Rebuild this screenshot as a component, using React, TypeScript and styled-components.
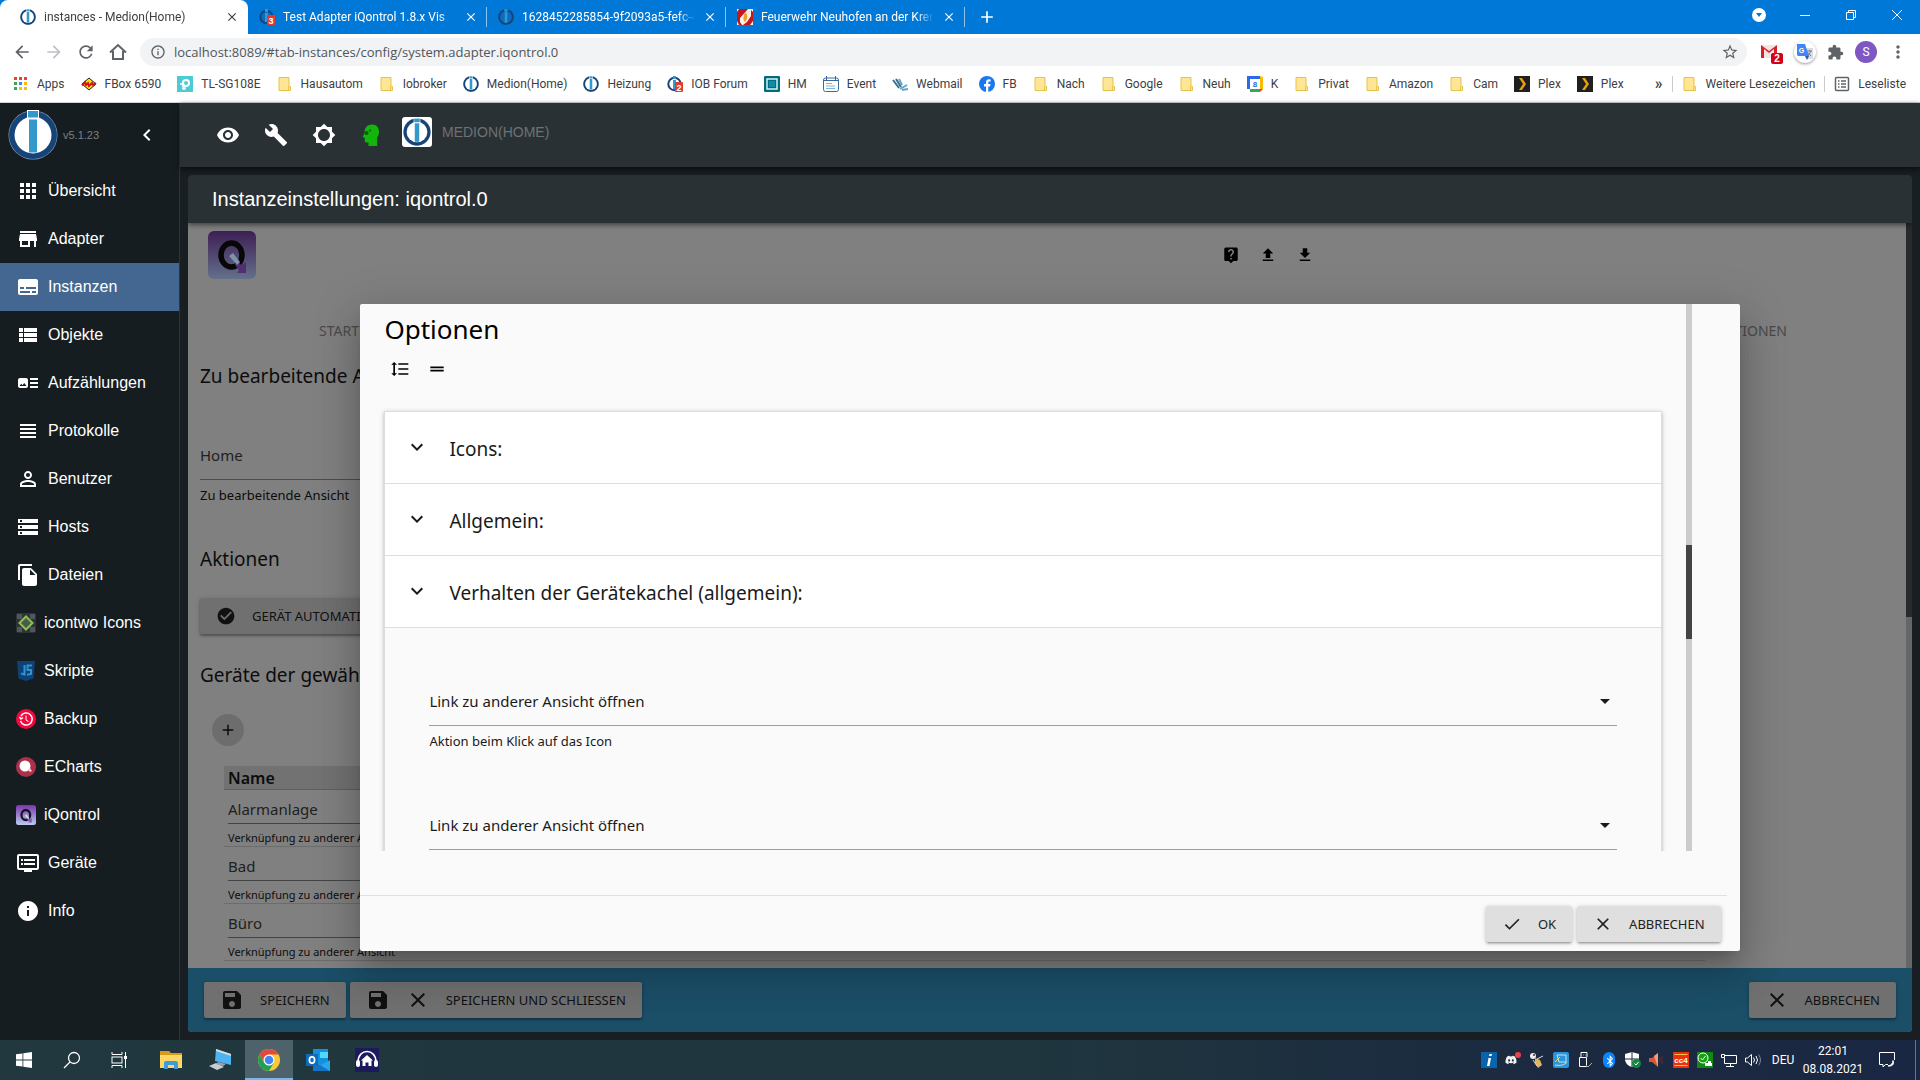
import React from 'react';
import styled, { createGlobalStyle, css } from 'styled-components';
import {
  MdAdd, MdApps, MdArrowBack, MdArrowDropDown, MdArrowForward, MdArtTrack, MdBrightness5, MdBuild,
  MdCheck, MdCheckCircle, MdChevronLeft, MdClose, MdDownload, MdDragHandle, MdDvr, MdExpandMore,
  MdExtension, MdFileCopy, MdFormatLineSpacing, MdInfo, MdInfoOutline, MdLiveHelp, MdMoreVert,
  MdPermIdentity, MdRefresh, MdSave, MdStarBorder, MdStorage, MdStore, MdSubtitles, MdUpload,
  MdViewHeadline, MdViewList, MdVisibility,
} from 'react-icons/md';
import { FaDiscord, FaBluetoothB } from 'react-icons/fa';

const uiFont = 'Roboto, "Noto Sans", sans-serif';
const urlFont = '"Open Sans", "Noto Sans", sans-serif';
const adminFont = '"Liberation Sans", Arial, sans-serif';
const pageFont = '"Noto Sans", "Open Sans", sans-serif';

const GlobalStyle = createGlobalStyle`
  *, *::before, *::after { box-sizing: border-box; }
  body { margin: 0; background: #181e21; }
  button, input, select { font: inherit; color: inherit; margin: 0; border: 0; border-radius: 0; background: none; padding: 0; }
  button { cursor: pointer; }
  a { color: inherit; text-decoration: none; }
  svg { display: block; flex: none; }
`;

const Screen = styled.div`
  display: flex;
  flex-direction: column;
  height: 100vh;
  min-width: 1200px;
  overflow: hidden;
`;

/* ---------- drawings ---------- */

type IconProps = { size?: number };

const BrokerLogo = ({ size = 16, dark = false }: { size?: number; dark?: boolean }) => (
  <svg width={size} height={size} viewBox="0 0 100 100">
    <circle cx="50" cy="50" r="49" fill={dark ? '#0b5aa5' : '#8fa9c4'} />
    <circle cx="50" cy="50" r="48" fill="#164477" />
    <circle cx="50" cy="50" r="37" fill={dark ? '#0a6cc4' : '#fff'} />
    <rect x="38" y="0" width="24" height="18" fill={dark ? '#0a6cc4' : '#fff'} />
    <rect x="40" y="2" width="20" height="13" fill="#3399cc" />
    <rect x="42" y="19" width="16" height="66" fill="#3399cc" />
  </svg>
);

const ForumLogo = ({ count, dark }: { count: string; dark?: boolean }) => (
  <svg width="16" height="16" viewBox="0 0 16 16">
    <circle cx="7.5" cy="8" r="6.2" fill={dark ? '#0a6cc4' : '#fff'} stroke="#164477" strokeWidth="2" />
    <rect x="6" y="0" width="3" height="3" fill="#3399cc" />
    <rect x="6" y="4" width="3" height="9" fill="#3399cc" />
    <rect x="8" y="6" width="8" height="10" rx="1" fill="#e23b2e" />
    <text x="12" y="14.5" fontSize="9" fontWeight="700" fontFamily="Liberation Sans" fill="#fff" textAnchor="middle">{count}</text>
  </svg>
);

const Flame = () => (
  <svg width="16" height="16" viewBox="0 0 16 16">
    <rect width="16" height="16" fill="#f7efe6" />
    <path d="M2 0h9L3 9v4l2 3H2L0 12V3z" fill="#c8161d" />
    <path d="M14 1l2 2v9l-3 4H6l4-3 4-6z" fill="#c8161d" />
    <path d="M8 3c3 3 3 6 0 10-3-3-1-6 0-10z" fill="#f39a2b" />
  </svg>
);

const HomeOutline = () => (
  <svg width="20" height="20" viewBox="0 0 20 20" fill="none" stroke="#5f6368" strokeWidth="2">
    <path d="M2 10.5L10 3l8 7.500M5 9v8h10V9" />
  </svg>
);

const AppsGrid = () => (
  <svg width="16" height="16" viewBox="0 0 16 16">
    {['#ea4335', '#ea4335', '#ea4335', '#34a853', '#4285f4', '#fbbc05', '#34a853', '#fbbc05', '#fbbc05'].map((c, i) => (
      <rect key={i} x={1 + (i % 3) * 5} y={1 + Math.floor(i / 3) * 5} width="3" height="3" fill={c} />
    ))}
  </svg>
);

const Fritz = () => (
  <svg width="16" height="16" viewBox="0 0 16 16">
    <path d="M8 2l7 6-7 6-7-6z" fill="#ffe000" stroke="#222" strokeWidth="1" />
    <path d="M1 9.500L4 6l1 3 2-2 1 3 3-3 1 2 3-2" fill="none" stroke="#d3122a" strokeWidth="2" />
  </svg>
);

const TpLink = () => (
  <svg width="16" height="16" viewBox="0 0 16 16">
    <rect width="16" height="16" fill="#4acbd6" />
    <circle cx="9" cy="7" r="3" fill="none" stroke="#fff" strokeWidth="2" />
    <path d="M3 8h3v5h2v-3" fill="none" stroke="#fff" strokeWidth="1.500" />
  </svg>
);

const FolderMark = () => (
  <svg width="16" height="16" viewBox="0 0 16 16">
    <path d="M2 1.500h10v9h1.500v4H2z" fill="#ffe694" stroke="#e8c24a" />
    <path d="M11.500 14.500v-4" stroke="#e8c24a" />
  </svg>
);

const HomematicMark = () => (
  <svg width="16" height="16" viewBox="0 0 16 16">
    <rect width="16" height="16" rx="1" fill="#036b80" />
    <rect x="3" y="3" width="10" height="10" fill="#036b80" stroke="#d8f1f4" strokeWidth="1.500" />
    <rect x="5" y="5" width="6" height="6" fill="#0d8ea3" />
  </svg>
);

const NoteMark = () => (
  <svg width="16" height="16" viewBox="0 0 16 16" fill="none" stroke="#3c6a99">
    <rect x="0.500" y="2" width="15" height="13.500" rx="2" fill="#fff" />
    <path d="M3.500 0v4M12.500 0v4M1 4.500h14" />
    <path d="M3 7.500h6M3 10h9M3 12.500h9" stroke="#7db5dd" />
  </svg>
);

const WebmailMark = () => (
  <svg width="16" height="16" viewBox="0 0 16 16" fill="none" strokeWidth="2">
    <path d="M1 4l6 8M4 3l5 8" stroke="#3c6f8c" />
    <path d="M7 3l3 6M8 13l7-4M10 14l6-1" stroke="#62a6c4" />
  </svg>
);

const FacebookMark = () => (
  <svg width="16" height="16" viewBox="0 0 16 16">
    <circle cx="8" cy="8" r="8" fill="#1877f2" />
    <path d="M7 16v-5.500H5V8h2V6.500C7 4.400 8.200 3.300 10 3.300l1.600.1v2h-1C9.600 5.400 9.300 6 9.300 6.700V8h2.200l-.4 2.500H9.300V16z" fill="#fff" />
  </svg>
);

const CalendarMark = () => (
  <svg width="16" height="16" viewBox="0 0 16 16">
    <path d="M0 0h13v3H3v10H0z" fill="#2a6ae8" />
    <path d="M13 0l3 1v12h-3z" fill="#fbbc04" />
    <path d="M3 13h10v3H3z" fill="#34a853" />
    <path d="M13 13h3l-3 3z" fill="#ea4335" />
    <rect x="3" y="3" width="10" height="10" fill="#fff" />
    <text x="8" y="11" fontSize="8" fontWeight="700" fontFamily="Liberation Sans" fill="#2a6ae8" textAnchor="middle">8</text>
  </svg>
);

const PlexMark = () => (
  <svg width="16" height="16" viewBox="0 0 16 16">
    <rect width="16" height="16" fill="#1f1f1f" />
    <path d="M5 2h3l4 6-4 6H5l4-6z" fill="#e5a00d" />
  </svg>
);

const ReadingList = () => (
  <svg width="16" height="16" viewBox="0 0 16 16" fill="none" stroke="#5f6368" strokeWidth="1.500">
    <rect x="1.500" y="1.500" width="13" height="13" rx="1" />
    <path d="M4 5h1.500M4 8h1.500M4 11h1.500M7 5h5M7 8h5M7 11h5" />
  </svg>
);

const GmailMark = () => (
  <svg width="24" height="24" viewBox="0 0 24 24">
    <path d="M2 5h16v13H2z" fill="#f1e6e4" />
    <path d="M2 18V5l8 6 8-6v13h-3V9l-5 4-5-4v9z" fill="#db1f26" />
    <rect x="12" y="13" width="12" height="11" rx="2" fill="#d0021b" />
    <text x="18" y="22" fontSize="10" fontWeight="700" fontFamily="Liberation Sans" fill="#fff" textAnchor="middle">2</text>
  </svg>
);

const TranslateMark = () => (
  <svg width="16" height="16" viewBox="0 0 16 16">
    <path d="M6 4h10v11H9z" fill="#d9dde2" />
    <path d="M0 0h8l4 12H1L0 11z" fill="#4285f4" />
    <path d="M8 12h4l-2 4z" fill="#2a56c6" />
    <text x="4.500" y="8.500" fontSize="7" fontWeight="700" fontFamily="Liberation Sans" fill="#fff" textAnchor="middle">G</text>
    <path d="M10 7h5M12.500 6v1M11 12l3-5M11 8.500l3 3.500" stroke="#72808f" fill="none" />
  </svg>
);

const GreenHead = () => (
  <svg width="24" height="24" viewBox="0 0 24 24">
    <path d="M12 1.500c5 0 7 3.500 7 7.500 0 2.500-.8 4-1.800 5.500V23H8.500v-3.500H6.200c-.9 0-1.400-.6-1.400-1.400V15l-1.600-.8c-.4-.2-.4-.6-.2-1L4.500 10C4.500 5 7 1.500 12 1.500z" fill="#12b50a" />
    <circle cx="6.500" cy="10" r="2" fill="#0a5c0c" />
    <circle cx="10" cy="7.500" r="1" fill="#0a5c0c" />
  </svg>
);

const QontrolLogo = ({ size = 20, dim = false }: IconProps & { dim?: boolean }) => (
  <svg width={size} height={size} viewBox="0 0 48 48">
    <defs>
      <linearGradient id={dim ? 'qdim' : 'qlit'} x1="0" y1="0" x2="0" y2="1">
        <stop offset="0" stopColor={dim ? '#3d1f55' : '#7a35ad'} />
        <stop offset="1" stopColor={dim ? '#64708a' : '#b9cdf0'} />
      </linearGradient>
    </defs>
    <rect width="48" height="48" rx="6" fill={`url(#${dim ? 'qdim' : 'qlit'})`} />
    <ellipse cx="23.500" cy="24" rx="10.500" ry="12" fill="none" stroke={dim ? '#070707' : '#15151c'} strokeWidth="5.500" />
    <path d="M30 30l3 4 5-3v11h-9l2-3-4-5z" fill={dim ? '#503070' : '#8d55bb'} />
    <path d="M21 25l4-3 7 9-3 3z" fill={dim ? '#7d93a6' : '#c5d8f2'} />
  </svg>
);

const IconTwo = () => (
  <svg width="20" height="20" viewBox="0 0 20 20">
    <rect width="20" height="20" rx="2" fill="#2c3436" />
    <path d="M1 1h5v5H1zM14 1h5v5h-5zM1 14h5v5H1zM14 14h5v5h-5z" fill="#50575a" />
    <path d="M10 3.500l6.500 6.500-6.500 6.500L3.500 10z" fill="#4a5a4c" stroke="#8cc152" strokeWidth="2" />
  </svg>
);

const ScriptMark = () => (
  <svg width="20" height="20" viewBox="0 0 20 20">
    <path d="M1 0h18l-1.500 17.500L10 20l-7.500-2.500z" fill="#0d4177" />
    <path d="M8.500 4v9.500l-3.500-1M16 4.500h-4.500V9H15v4l-4 .8" fill="none" stroke="#2f93cc" strokeWidth="2" />
  </svg>
);

const BackupMark = () => (
  <svg width="20" height="20" viewBox="0 0 20 20" fill="none" stroke="#fff">
    <circle cx="10" cy="10" r="10" fill="#f5063d" stroke="none" />
    <path d="M4.500 12a6 6 0 1 0 .5-5M3.500 8l1.500 2 2-1.500" strokeWidth="1.500" />
    <path d="M10 6.500V11l2.500 1.500" />
  </svg>
);

const ChartsMark = () => (
  <svg width="20" height="20" viewBox="0 0 20 20">
    <circle cx="10" cy="10" r="10" fill="#ac2f4c" />
    <circle cx="9" cy="9" r="5.500" fill="#fff" />
    <path d="M12 13l2-2 2 3-2 1z" fill="#f0cdd6" />
  </svg>
);

const WindowsMark = () => (
  <svg width="16" height="16" viewBox="0 0 16 16" fill="#fff">
    <path d="M0 2.300L6.500 1.400v6.200H0zM7.300 1.300L16 0v7.600H7.300zM0 8.400h6.500v6.200L0 13.700zM7.300 8.400H16V16l-8.700-1.300z" />
  </svg>
);

const SearchMark = () => (
  <svg width="18" height="18" viewBox="0 0 18 18" fill="none" stroke="#fff" strokeWidth="1.300">
    <circle cx="11" cy="7" r="5.500" />
    <path d="M7 11l-6 6" />
  </svg>
);

const TaskViewMark = () => (
  <svg width="18" height="16" viewBox="0 0 18 16" fill="none" stroke="#fff">
    <path d="M1 0v2.500h10V0M1 16v-2.500h10V16M14.500 0v16" />
    <rect x="1" y="5" width="10" height="6" />
    <rect x="13" y="4" width="3" height="3" fill="#fff" stroke="none" />
  </svg>
);

const ExplorerMark = () => (
  <svg width="24" height="20" viewBox="0 0 24 20">
    <path d="M1 1h9l2 2h11v15H1z" fill="#d99a1c" />
    <path d="M1 5h22v13H1z" fill="#ffd766" />
    <path d="M5 19v-6c0-1 .7-2 2-2h10c1.300 0 2 1 2 2v6h-4v-4H9v4z" fill="#3f9bdc" />
  </svg>
);

const RemoteMark = () => (
  <svg width="24" height="22" viewBox="0 0 24 22">
    <path d="M8 0l15 5v11L7 12z" fill="#4db4f2" />
    <path d="M8 0l15 5v2L8 2z" fill="#d5dde2" />
    <path d="M1 17l7-3 8 4-7 3z" fill="#c8cfd3" />
    <path d="M10 13l8 2-3 2-7-2z" fill="#9aa5ab" />
  </svg>
);

const ChromeMark = () => (
  <svg width="22" height="22" viewBox="0 0 22 22">
    <circle cx="11" cy="11" r="11" fill="#fbc934" />
    <path d="M1.500 5.500A11 11 0 0 1 20.500 5.500H11L6.200 13.800z" fill="#e04a3c" />
    <path d="M1.500 5.500A11 11 0 0 0 11 22l4.800-8.200H6.200z" fill="#1f9f58" />
    <circle cx="11" cy="11" r="5.500" fill="#fff" />
    <circle cx="11" cy="11" r="4.300" fill="#4285f4" />
  </svg>
);

const OutlookMark = () => (
  <svg width="24" height="22" viewBox="0 0 24 22">
    <rect x="7" y="0" width="15" height="18" fill="#1490df" />
    <rect x="14" y="3" width="8" height="6" fill="#50d9ff" />
    <path d="M7 12l8 4 9-5v11H7z" fill="#28a8ea" />
    <path d="M7 12l17 10H7z" fill="#1473c5" />
    <rect x="0" y="5" width="12" height="12" fill="#0f6cbd" />
    <ellipse cx="6" cy="11" rx="2.600" ry="3.200" fill="none" stroke="#fff" strokeWidth="1.700" />
  </svg>
);

const RadioHouse = () => (
  <svg width="24" height="24" viewBox="0 0 24 24">
    <rect width="24" height="24" fill="#1b1b5c" />
    <path d="M3 14C3 0 21 0 21 14" fill="none" stroke="#fff" strokeWidth="1.500" />
    <rect x="1" y="12" width="4" height="7" rx="2" fill="#fff" />
    <rect x="19" y="12" width="4" height="7" rx="2" fill="#fff" />
    <path d="M12 7l6 5.500h-1.500V18h-3v-3.500h-3V18h-3v-5.500H6z" fill="#fff" />
  </svg>
);

/* ---------- browser window ---------- */

const TabStrip = styled.div`
  display: flex;
  height: 34px;
  flex: none;
  background: #0078d7;
  color: #fff;
  font: 12px/34px ${uiFont};
`;

const Tab = styled.div<{ $active?: boolean }>`
  display: flex;
  align-items: center;
  gap: 8px;
  width: 239px;
  padding: 0 9px 0 11px;
  ${p => p.$active ? css`
    width: 248px;
    padding-left: 20px;
    background: #fff;
    color: #3c4043;
    border-radius: 8px 8px 0 0;
  ` : css`
    background: linear-gradient(#8fc3ee, #8fc3ee) right center / 1px 20px no-repeat;
  `}
`;

const TabTitle = styled.a`
  flex: 1;
  min-width: 0;
  overflow: hidden;
  white-space: nowrap;
  mask-image: linear-gradient(90deg, #000 90%, transparent);
`;

const PlainButton = styled.button`
  display: grid;
  place-items: center;
`;

const NewTab = styled(PlainButton)`
  width: 44px;
`;

const WindowControls = styled.div`
  display: flex;
  margin-left: auto;
  padding-bottom: 5px;
`;

const WindowButton = styled(PlainButton)`
  width: 46px;
`;

const Toolbar = styled.div`
  display: flex;
  align-items: center;
  flex: none;
  height: 36px;
  padding: 0 12px;
  background: #fff;
  color: #5f6368;
`;

const NavButtons = styled.div`
  display: flex;
  gap: 12px;
  padding-right: 12px;
`;

const AddressBar = styled.label`
  display: flex;
  align-items: center;
  gap: 8px;
  flex: 1;
  height: 28px;
  padding: 0 8px 0 10px;
  border-radius: 14px;
  background: #f1f3f4;
  font: 13px/28px ${urlFont};
  input { flex: 1; outline: none; color: #50555a; }
`;

const Extensions = styled.div`
  display: flex;
  align-items: center;
  gap: 11px;
  padding-left: 12px;
`;

const RoundBadge = styled.span<{ $bg: string }>`
  display: grid;
  place-items: center;
  width: 22px;
  height: 22px;
  border-radius: 50%;
  background: ${p => p.$bg};
  color: #fff;
  font: 12px/22px ${uiFont};
`;

const ShadowBadge = styled(RoundBadge)`
  box-shadow: 0 1px 3px rgba(0, 0, 0, .4);
`;

const Bookmarks = styled.nav`
  display: flex;
  align-items: center;
  gap: 16px;
  flex: none;
  height: 33px;
  padding: 0 14px 4px 13px;
  border-bottom: 1px solid #d0d2d4;
  background: #fff;
  color: #3c4043;
  font: 12px/28px ${uiFont};
`;

const Bookmark = styled.a`
  display: flex;
  align-items: center;
  gap: 8px;
  white-space: nowrap;
`;

const BookmarkEnd = styled.div`
  display: flex;
  align-items: center;
  gap: 9px;
  margin-left: auto;
`;

const MoreBookmarks = styled.button`
  font-size: 16px;
  font-weight: 500;
`;

const Rule = styled.span`
  width: 1px;
  height: 16px;
  background: #c8cacc;
`;

const bookmarks: [React.ReactNode, string][] = [
  [<AppsGrid />, 'Apps'], [<Fritz />, 'FBox 6590'], [<TpLink />, 'TL-SG108E'], [<FolderMark />, 'Hausautom'],
  [<FolderMark />, 'Iobroker'], [<BrokerLogo />, 'Medion(Home)'], [<BrokerLogo />, 'Heizung'],
  [<ForumLogo count="2" />, 'IOB Forum'], [<HomematicMark />, 'HM'], [<NoteMark />, 'Event'],
  [<WebmailMark />, 'Webmail'], [<FacebookMark />, 'FB'], [<FolderMark />, 'Nach'], [<FolderMark />, 'Google'],
  [<FolderMark />, 'Neuh'], [<CalendarMark />, 'K'], [<FolderMark />, 'Privat'], [<FolderMark />, 'Amazon'],
  [<FolderMark />, 'Cam'], [<PlexMark />, 'Plex'], [<PlexMark />, 'Plex'],
];

const tabs: [React.ReactNode, string][] = [
  [<BrokerLogo />, 'instances - Medion(Home)'],
  [<ForumLogo count="3" dark />, 'Test Adapter iQontrol 1.8.x Vis'],
  [<BrokerLogo dark />, '1628452285854-9f2093a5-fefc-4'],
  [<Flame />, 'Feuerwehr Neuhofen an der Krem'],
];

const Browser = () => (
  <>
    <TabStrip>
      {tabs.map(([icon, title], i) => (
        <Tab key={title} $active={i === 0}>
          {icon}
          <TabTitle href="#">{title}</TabTitle>
          <PlainButton aria-label="Tab schließen"><MdClose size={14} /></PlainButton>
        </Tab>
      ))}
      <NewTab aria-label="Neuer Tab"><MdAdd size={20} /></NewTab>
      <WindowControls>
        <WindowButton aria-label="Tabsuche">
          <svg width="14" height="14" viewBox="0 0 14 14"><circle cx="7" cy="7" r="7" fill="#fff" /><path d="M4 5h6l-3 4z" fill="#0078d7" /></svg>
        </WindowButton>
        <WindowButton aria-label="Minimieren">
          <svg width="10" height="10" viewBox="0 0 10 10"><path d="M0 5.500h10" stroke="#fff" /></svg>
        </WindowButton>
        <WindowButton aria-label="Verkleinern">
          <svg width="10" height="10" viewBox="0 0 10 10" fill="none" stroke="#fff"><path d="M.5 2.500h7v7h-7zM2.500 2.500v-2h7v7h-2" /></svg>
        </WindowButton>
        <WindowButton aria-label="Schließen">
          <svg width="10" height="10" viewBox="0 0 10 10"><path d="M0 0l10 10M10 0L0 10" stroke="#fff" /></svg>
        </WindowButton>
      </WindowControls>
    </TabStrip>
    <Toolbar>
      <NavButtons>
        <PlainButton aria-label="Zurück"><MdArrowBack size={20} /></PlainButton>
        <PlainButton aria-label="Vorwärts"><MdArrowForward size={20} color="#bdc1c6" /></PlainButton>
        <PlainButton aria-label="Neu laden"><MdRefresh size={20} /></PlainButton>
        <PlainButton aria-label="Startseite"><HomeOutline /></PlainButton>
      </NavButtons>
      <AddressBar>
        <MdInfoOutline size={16} />
        <input aria-label="Adresse" defaultValue="localhost:8089/#tab-instances/config/system.adapter.iqontrol.0" />
        <MdStarBorder size={18} />
      </AddressBar>
      <Extensions>
        <GmailMark />
        <ShadowBadge $bg="#fff"><TranslateMark /></ShadowBadge>
        <MdExtension size={17} />
        <RoundBadge $bg="#7e57c2">S</RoundBadge>
        <MdMoreVert size={20} />
      </Extensions>
    </Toolbar>
    <Bookmarks>
      {bookmarks.map(([icon, label], i) => <Bookmark href="#" key={i}>{icon}{label}</Bookmark>)}
      <BookmarkEnd>
        <MoreBookmarks>»</MoreBookmarks>
        <Rule />
        <Bookmark href="#"><FolderMark />Weitere Lesezeichen</Bookmark>
        <Rule />
        <Bookmark href="#"><ReadingList />Leseliste</Bookmark>
      </BookmarkEnd>
    </Bookmarks>
  </>
);

/* ---------- admin shell ---------- */

const Shell = styled.div`
  display: flex;
  flex: 1;
  min-height: 0;
  font-family: ${adminFont};
  color: #fff;
`;

const Sidebar = styled.aside`
  flex: none;
  width: 180px;
  border-right: 1px solid #2d373b;
  background: #161d20;
`;

const Brand = styled.div`
  display: flex;
  align-items: center;
  gap: 5px;
  height: 64px;
  padding-left: 8px;
  color: #7b8082;
  font-size: 11px;
  button { margin-left: auto; margin-right: 20px; color: #fff; }
`;

const NavItem = styled.a<{ $active?: boolean }>`
  display: flex;
  align-items: center;
  gap: 8px;
  height: 48px;
  padding-left: 16px;
  font-size: 16px;
  background: ${p => (p.$active ? '#446791' : 'transparent')};
`;

const IconSlot = styled.span<{ $image: boolean }>`
  display: grid;
  place-items: center;
  width: ${p => (p.$image ? 20 : 24)}px;
`;

const navItems: [React.ReactNode, string, boolean][] = [
  [<MdApps size={24} />, 'Übersicht', false], [<MdStore size={24} />, 'Adapter', false],
  [<MdSubtitles size={24} />, 'Instanzen', false], [<MdViewList size={24} />, 'Objekte', false],
  [<MdArtTrack size={24} />, 'Aufzählungen', false], [<MdViewHeadline size={24} />, 'Protokolle', false],
  [<MdPermIdentity size={24} />, 'Benutzer', false], [<MdStorage size={24} />, 'Hosts', false],
  [<MdFileCopy size={24} />, 'Dateien', false], [<IconTwo />, 'icontwo Icons', true],
  [<ScriptMark />, 'Skripte', true], [<BackupMark />, 'Backup', true], [<ChartsMark />, 'ECharts', true],
  [<QontrolLogo />, 'iQontrol', true], [<MdDvr size={24} />, 'Geräte', false], [<MdInfo size={24} />, 'Info', false],
];

const Main = styled.main`
  display: flex;
  flex-direction: column;
  flex: 1;
  min-width: 0;
  background: #181e21;
`;

const AppHeader = styled.header`
  display: flex;
  align-items: center;
  gap: 24px;
  flex: none;
  height: 64px;
  padding-left: 36px;
  background: #2a3135;
  box-shadow: 0 2px 6px rgba(0, 0, 0, .6);
`;

const HostButton = styled.button`
  display: flex;
  align-items: center;
  gap: 10px;
  height: 36px;
  margin: 0 0 6px -6px;
  color: #6d7274;
  font-size: 14px;
`;

const HostIcon = styled.span`
  display: grid;
  place-items: center;
  width: 30px;
  height: 30px;
  border-radius: 3px;
  background: #fff;
`;

const Panel = styled.section`
  display: flex;
  flex-direction: column;
  flex: 1;
  min-height: 0;
  margin: 8px;
  border-radius: 4px;
  overflow: hidden;
`;

const PanelTitle = styled.h1`
  z-index: 1;
  flex: none;
  margin: 0;
  padding-left: 24px;
  background: #2a3135;
  box-shadow: 0 2px 5px rgba(0, 0, 0, .5);
  font: 400 20px/48px ${adminFont};
`;

const Frame = styled.div`
  position: relative;
  display: flex;
  flex-direction: column;
  flex: 1;
  min-height: 0;
  background: #808080;
  color: #0c0c0c;
  font-family: ${pageFont};
`;

const PageRow = styled.div`
  display: flex;
  flex: 1;
  min-height: 0;
  overflow: hidden;
`;

const Page = styled.div`
  flex: 1;
  min-width: 0;
`;

const Track = styled.div<{ $color: string }>`
  flex: none;
  width: 6px;
  background: ${p => p.$color};
`;

const Thumb = styled.div<{ $color: string; $top: string; $height: string }>`
  height: ${p => p.$height};
  margin-top: ${p => p.$top};
  background: ${p => p.$color};
`;

const PageHeader = styled.div`
  display: grid;
  grid-template-columns: 60% 1fr;
  height: 84px;
  padding-top: 8px;
`;

const PageLogo = styled.div`
  padding-left: 20px;
`;

const PageTools = styled.div`
  display: flex;
  gap: 13px;
  height: 48px;
  color: #000;
  button { width: 24px; }
`;

const PageTabs = styled.nav`
  display: flex;
  justify-content: space-between;
  padding: 0 119px 0 131px;
  color: #4a4a4a;
  font-size: 14px;
  line-height: 48px;
`;

const PageBody = styled.div`
  padding: 8px 201px 0 12px;
`;

const Heading = styled.h2`
  margin: 0;
  font-size: 19px;
  font-weight: 400;
  line-height: 26px;
  padding-bottom: 2px;
  white-space: nowrap;
`;

const Field = styled.label`
  display: flex;
  flex-direction: column;
  gap: 7px;
  margin: 40px 0 43px;
  font-size: 13px;
  line-height: 16px;
  input { height: 49px; border-bottom: 1px solid #4c4c4c; font-size: 15px; color: #202020; }
`;

const buttonBase = css`
  display: flex;
  align-items: center;
  height: 36px;
  padding: 0 16px;
  gap: 16px;
  border-radius: 2px;
  font-size: 13px;
  line-height: 36px;
  white-space: nowrap;
`;

const GreyButton = styled.button`
  ${buttonBase}
  background: #707070;
  color: #111;
  box-shadow: 0 2px 2px rgba(0, 0, 0, .25), 0 1px 5px rgba(0, 0, 0, .2);
`;

const DetectButton = styled(GreyButton)`
  margin: 24px 0 28px;
`;

const AddButton = styled(PlainButton)`
  width: 32px;
  height: 32px;
  margin: 24px 12px 20px;
  border-radius: 50%;
  background: #6d6d6d;
`;

const DeviceTable = styled.table`
  width: calc(100% - 24px);
  margin-left: 24px;
  border-spacing: 0;
  th {
    height: 24px;
    padding: 0 4px;
    border-bottom: 1px solid #5f5f5f;
    background: #727272;
    font-size: 16px;
    font-weight: 600;
    line-height: 22px;
    text-align: left;
  }
  td { padding: 5px 4px 0; border-bottom: 1px solid #6c6c6c; }
  label { display: flex; flex-direction: column; gap: 6px; font-size: 11px; line-height: 16px; }
  input { height: 29px; border-bottom: 1px solid #444; font-size: 15px; color: #202020; }
`;

const SaveBar = styled.footer`
  display: flex;
  align-items: center;
  gap: 4px;
  flex: none;
  height: 64px;
  padding: 0 16px;
  background: #1b4f68;
  button:last-child { margin-left: auto; }
`;

/* ---------- options dialog ---------- */

const Dialog = styled.div`
  position: absolute;
  top: 10%;
  left: 10%;
  z-index: 2;
  display: flex;
  flex-direction: column;
  width: 80%;
  height: 80%;
  border-radius: 2px;
  background: #fafafa;
  color: #1a1a1a;
  box-shadow: 0 24px 38px 3px rgba(0, 0, 0, .14), 0 9px 46px 8px rgba(0, 0, 0, .12), 0 11px 15px -7px rgba(0, 0, 0, .2);
`;

const DialogScroll = styled.div`
  display: flex;
  flex: 1;
  min-height: 0;
  margin-right: 48px;
  overflow: hidden;
`;

const DialogContent = styled.div`
  flex: 1;
  padding: 8px 24px 0;
`;

const DialogTitle = styled.h2`
  margin: 0;
  color: #000;
  font-size: 26px;
  font-weight: 400;
  line-height: 34px;
`;

const DialogTools = styled.div`
  display: flex;
  gap: 13px;
  height: 46px;
  margin-bottom: 19px;
  padding-left: 4px;
  color: #000;
  button { width: 24px; }
`;

const Accordion = styled.div`
  border: 1px solid #ddd;
  box-shadow: 0 2px 2px rgba(0, 0, 0, .14), 0 1px 5px rgba(0, 0, 0, .2);
`;

const AccordionRow = styled.button`
  display: flex;
  align-items: center;
  gap: 20px;
  width: 100%;
  height: 72px;
  padding: 4px 20px 0;
  border-bottom: 1px solid #ddd;
  background: #fff;
  font-size: 19px;
  line-height: 24px;
  svg { margin-bottom: 4px; }
`;

const AccordionBody = styled.div`
  padding: 49px 44px 48px;
`;

const SelectField = styled.label`
  display: flex;
  flex-direction: column;
  gap: 7px;
  margin-bottom: 52px;
  font-size: 13px;
  line-height: 16px;
`;

const SelectBox = styled.span`
  display: grid;
  align-items: center;
  border-bottom: 1px solid #9e9e9e;
  & > * { grid-area: 1 / 1; }
  select { height: 48px; appearance: none; font-size: 15px; outline: none; }
  svg { justify-self: end; pointer-events: none; }
`;

const DialogFooter = styled.div`
  display: flex;
  justify-content: flex-end;
  gap: 5px;
  margin: 44px 13px 0 0;
  padding: 10px 6px 9px;
  border-top: 1px solid #e0e0e0;
`;

const DialogButton = styled.button`
  ${buttonBase}
  background: #dfdfdf;
  color: #222;
  box-shadow: 0 2px 2px rgba(0, 0, 0, .14), 0 3px 1px -2px rgba(0, 0, 0, .12), 0 1px 5px rgba(0, 0, 0, .2);
`;

const OptionSelect = ({ caption }: { caption?: string }) => (
  <SelectField>
    <SelectBox>
      <select defaultValue="link" aria-label={caption ? undefined : 'Aktion'}>
        <option value="link">Link zu anderer Ansicht öffnen</option>
      </select>
      <MdArrowDropDown size={24} />
    </SelectBox>
    {caption}
  </SelectField>
);

const OptionsDialog = () => (
  <Dialog role="dialog" aria-label="Optionen">
    <DialogScroll>
      <DialogContent>
        <DialogTitle>Optionen</DialogTitle>
        <DialogTools>
          <PlainButton aria-label="Alle aufklappen"><MdFormatLineSpacing size={20} /></PlainButton>
          <PlainButton aria-label="Alle zuklappen"><MdDragHandle size={20} /></PlainButton>
        </DialogTools>
        <Accordion>
          {['Icons:', 'Allgemein:', 'Verhalten der Gerätekachel (allgemein):'].map(t => (
            <AccordionRow key={t}><MdExpandMore size={24} />{t}</AccordionRow>
          ))}
          <AccordionBody>
            <OptionSelect caption="Aktion beim Klick auf das Icon" />
            <OptionSelect />
          </AccordionBody>
        </Accordion>
      </DialogContent>
      <Track $color="#ccc"><Thumb $color="#444" $top="241px" $height="94px" /></Track>
    </DialogScroll>
    <DialogFooter>
      <DialogButton><MdCheck size={20} />OK</DialogButton>
      <DialogButton><MdClose size={20} />ABBRECHEN</DialogButton>
    </DialogFooter>
  </Dialog>
);

const Admin = () => (
  <Shell>
    <Sidebar>
      <Brand>
        <BrokerLogo size={50} />v5.1.23
        <PlainButton aria-label="Menü einklappen"><MdChevronLeft size={24} /></PlainButton>
      </Brand>
      <nav>
        {navItems.map(([icon, label, image]) => (
          <NavItem href="#" key={label} $active={label === 'Instanzen'}>
            <IconSlot $image={image}>{icon}</IconSlot>{label}
          </NavItem>
        ))}
      </nav>
    </Sidebar>
    <Main>
      <AppHeader>
        <PlainButton aria-label="Sichtbarkeit"><MdVisibility size={24} /></PlainButton>
        <PlainButton aria-label="Einstellungen"><MdBuild size={24} /></PlainButton>
        <PlainButton aria-label="Farbschema"><MdBrightness5 size={24} /></PlainButton>
        <PlainButton aria-label="Expertenmodus"><GreenHead /></PlainButton>
        <HostButton><HostIcon><BrokerLogo size={28} /></HostIcon>MEDION(HOME)</HostButton>
      </AppHeader>
      <Panel>
        <PanelTitle>Instanzeinstellungen: iqontrol.0</PanelTitle>
        <Frame>
          <PageRow>
            <Page>
              <PageHeader>
                <PageLogo><QontrolLogo size={48} dim /></PageLogo>
                <PageTools>
                  <PlainButton aria-label="Hilfe"><MdLiveHelp size={18} /></PlainButton>
                  <PlainButton aria-label="Hochladen"><MdUpload size={18} /></PlainButton>
                  <PlainButton aria-label="Herunterladen"><MdDownload size={18} /></PlainButton>
                </PageTools>
              </PageHeader>
              <PageTabs><a href="#">START</a><a href="#">OPTIONEN</a></PageTabs>
              <PageBody>
                <Heading>Zu bearbeitende Ansicht</Heading>
                <Field><input defaultValue="Home" />Zu bearbeitende Ansicht</Field>
                <Heading>Aktionen</Heading>
                <DetectButton><MdCheckCircle size={20} />GERÄT AUTOMATISCH</DetectButton>
                <Heading>Geräte der gewählten Ansicht</Heading>
                <AddButton aria-label="Gerät hinzufügen"><MdAdd size={18} /></AddButton>
                <DeviceTable>
                  <thead><tr><th>Name</th></tr></thead>
                  <tbody>
                    {['Alarmanlage', 'Bad', 'Büro'].map(name => (
                      <tr key={name}>
                        <td><label><input defaultValue={name} />Verknüpfung zu anderer Ansicht</label></td>
                      </tr>
                    ))}
                  </tbody>
                </DeviceTable>
              </PageBody>
            </Page>
            <Track $color="#666"><Thumb $color="#2a2a2a" $top="0" $height="394px" /></Track>
          </PageRow>
          <SaveBar>
            <GreyButton><MdSave size={24} />SPEICHERN</GreyButton>
            <GreyButton><MdSave size={24} /><MdClose size={24} />SPEICHERN UND SCHLIESSEN</GreyButton>
            <GreyButton><MdClose size={24} />ABBRECHEN</GreyButton>
          </SaveBar>
          <OptionsDialog />
        </Frame>
      </Panel>
    </Main>
  </Shell>
);

/* ---------- taskbar ---------- */

const TaskbarRoot = styled.footer`
  display: flex;
  flex: none;
  height: 40px;
  background: linear-gradient(90deg, #21383f 0%, #1f353e 55%, #1b2a40 80%, #1a2743 100%);
  color: #fff;
  font: 12px/18px ${uiFont};
`;

const TaskGroup = styled.div`
  display: flex;
  margin-right: 3px;
`;

const AppGroup = styled.div`
  display: flex;
  gap: 1px;
`;

const TaskButton = styled(PlainButton)<{ $active?: boolean }>`
  width: 48px;
  ${p => p.$active && css`
    background: #4e626b;
    box-shadow: inset 0 -2px #76b9ed;
  `}
`;

const Tray = styled.div`
  display: flex;
  align-items: center;
  margin-left: auto;
`;

const TrayIcon = styled.span`
  display: grid;
  place-items: center;
  width: 24px;
`;

const Language = styled.span`
  width: 36px;
  text-align: center;
`;

const Clock = styled.time`
  width: 64px;
  text-align: center;
`;

const Notice = styled(PlainButton)`
  width: 44px;
  margin-right: 6px;
`;

const ShowDesktop = styled.button`
  align-self: stretch;
  width: 5px;
  border-left: 1px solid #6c7586;
`;

const tray: React.ReactNode[] = [
  <svg width="16" height="16" viewBox="0 0 16 16"><rect width="16" height="16" fill="#0a64ad" /><path d="M8.500 2h2.500l-.5 2H8zM7.500 6H10l-1.500 8H6z" fill="#fff" /></svg>,
  <svg width="16" height="16" viewBox="0 0 16 16"><FaDiscord x="0" y="2" width="15" height="13" color="#f2f2f2" /><circle cx="13" cy="3" r="3" fill="#ed4245" /></svg>,
  <svg width="16" height="16" viewBox="0 0 16 16"><circle cx="4" cy="4" r="3" fill="#eee" /><circle cx="5" cy="3" r="1" fill="#333" /><path d="M6 6l5 2 2 5-4 3-3-5z" fill="#e6b25a" /><path d="M8 7l6-3M4 8l4 6" stroke="#ddd" /></svg>,
  <svg width="16" height="16" viewBox="0 0 16 16"><rect width="16" height="16" rx="2" fill="#2b95d6" /><path d="M4 3h9v7H6zM2 13c5 1 10 0 12-3" fill="none" stroke="#bfe4f8" /><path d="M2 10l5-5" stroke="#e8d27a" /></svg>,
  <svg width="16" height="16" viewBox="0 0 16 16" fill="none" stroke="#fff"><path d="M4 5V.5h6V5M2.500 5.500h7v9h-7zM6 3h.5M8 3h.5" /><path d="M9 13l2 2 4-4" stroke="#aaa" /></svg>,
  <svg width="16" height="16" viewBox="0 0 16 16"><rect x="2" width="12" height="16" rx="6" fill="#0a84ff" /><FaBluetoothB x="3" y="3" width="10" height="10" color="#fff" /></svg>,
  <svg width="16" height="16" viewBox="0 0 16 16"><path d="M7 0l7 2v5c0 4-3 7-7 8-4-1-7-4-7-8V2z" fill="#fff" /><path d="M7 0v15M0 7h14" stroke="#1b2a40" /><circle cx="11.500" cy="11.500" r="4.500" fill="#10893e" /><path d="M9.500 11.500l1.500 1.500 2.500-3" stroke="#fff" fill="none" /></svg>,
  <svg width="16" height="16" viewBox="0 0 16 16"><path d="M0 6h3l6-5v14l-6-5H0z" fill="#d5583a" /><path d="M5 4l4-3v14z" fill="#f19b80" /><path d="M11 5v6M13 4v8" stroke="#5c2a2c" /></svg>,
  <svg width="16" height="16" viewBox="0 0 16 16"><rect width="16" height="16" fill="#e8340c" /><path d="M1.500 2.500h13M1.500 13.500h13" stroke="#ffc04a" /><text x="8" y="11" fontSize="8" fontWeight="700" fontFamily="Liberation Sans" fill="#fff" textAnchor="middle">cc4</text></svg>,
  <svg width="16" height="16" viewBox="0 0 16 16"><rect width="16" height="16" fill="#0f8a12" /><circle cx="6" cy="6" r="5" fill="#13a10e" stroke="#fff" /><path d="M3.500 6l2 2 3-4" stroke="#fff" fill="none" /><path d="M8 11h7v3H8zM11 9h3v2h-3z" fill="#fff" /></svg>,
  <svg width="16" height="16" viewBox="0 0 16 16" fill="none" stroke="#fff"><path d="M4 3.500h11.500v8H3.500V6M9.500 12v2.500M5 14.500h8M.5 2.500h3v3h-3z" /></svg>,
  <svg width="16" height="16" viewBox="0 0 16 16" fill="none" stroke="#fff"><path d="M.5 6h2l4-3.500v11L2.500 10h-2zM8.500 5.500q2 2.500 0 5M11 4q3 4 0 8" /><path d="M13.500 2.500q4 5.500 0 11" stroke="#7c8798" /></svg>,
];

const Taskbar = () => (
  <TaskbarRoot>
    <TaskGroup>
      <TaskButton aria-label="Start"><WindowsMark /></TaskButton>
      <TaskButton aria-label="Suche"><SearchMark /></TaskButton>
      <TaskButton aria-label="Taskansicht"><TaskViewMark /></TaskButton>
    </TaskGroup>
    <AppGroup>
      <TaskButton aria-label="Explorer"><ExplorerMark /></TaskButton>
      <TaskButton aria-label="Remotedesktop"><RemoteMark /></TaskButton>
      <TaskButton aria-label="Chrome" $active><ChromeMark /></TaskButton>
      <TaskButton aria-label="Outlook"><OutlookMark /></TaskButton>
      <TaskButton aria-label="Radio"><RadioHouse /></TaskButton>
    </AppGroup>
    <Tray>
      {tray.map((icon, i) => <TrayIcon key={i}>{icon}</TrayIcon>)}
      <Language>DEU</Language>
      <Clock>22:01<br />08.08.2021</Clock>
      <Notice aria-label="Benachrichtigungen">
        <svg width="18" height="18" viewBox="0 0 18 18" fill="none" stroke="#fff"><path d="M10 13.500H7.500L5 16v-2.500H1.500v-12h15V9" /><path d="M15 9.500c1.500 4-1 6-5 5.500 3-.5 5-2.500 5-5.500z" fill="#fff" /></svg>
      </Notice>
      <ShowDesktop aria-label="Desktop anzeigen" />
    </Tray>
  </TaskbarRoot>
);

export default function App() {
  return (
    <Screen>
      <GlobalStyle />
      <Browser />
      <Admin />
      <Taskbar />
    </Screen>
  );
}
